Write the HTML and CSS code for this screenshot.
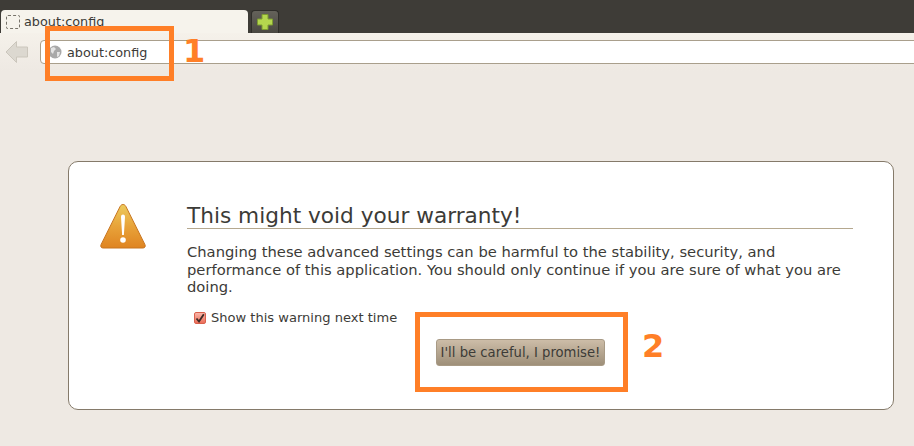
FILE: index.html
```html
<!DOCTYPE html>
<html lang="en">
<head>
  <meta charset="UTF-8" />
  <title>about:config</title>
  <link rel="stylesheet" href="styles.css">
</head>
<body>
  <div class="tabbar">
    <div class="tab">
      <span class="tab-icon"></span>
      <span class="tab-title">about:config</span>
    </div>
    <div class="new-tab">
      <svg width="18" height="18" viewBox="0 0 18 18">
        <path d="M6 1.5h6v4.5h4.5v6H12v4.5H6V12H1.5V6H6z" fill="#b4d64e" stroke="#7d9c30" stroke-width="1"/>
      </svg>
    </div>
  </div>

  <div class="navbar">
    <svg class="back" width="24" height="24" viewBox="0 0 24 24">
      <path d="M1 12L11.500 1.500V7H22.500V17H11.500V22.500z" fill="#dcd8d0" stroke="#cbc6bc" stroke-width="1"/>
    </svg>
    <div class="urlbar">
      <svg class="globe" width="14" height="14" viewBox="0 0 14 14">
        <circle cx="7" cy="7" r="6.500" fill="#a9a9a9"/>
        <path d="M3 3l3-1 2 2-2 2-1 3-2-2zM9 7l3 0-1 4-2 1z" fill="#e4e4e4"/>
      </svg>
      <span class="url-text">about:config</span>
    </div>
  </div>

  <!-- Warning card -->
  <main class="page">
    <div class="card">
      <div class="warn-icon">
        <svg width="48" height="48" viewBox="0 0 48 48">
          <defs>
            <linearGradient id="warn" x1="0" y1="0" x2="0" y2="1">
              <stop offset="0" stop-color="#eccb5c"/>
              <stop offset="0.5" stop-color="#e8a33a"/>
              <stop offset="1" stop-color="#df8421"/>
            </linearGradient>
          </defs>
          <path d="M24 2.500c1.300 0 2.200.7 2.900 2l19 38c.9 1.900 0 3.500-2 3.500H4.100c-2 0-2.900-1.600-2-3.500l19-38c.7-1.300 1.600-2 2.900-2z" fill="url(#warn)" stroke="#c8741f" stroke-width="1"/>
          <path d="M22 14.500c0-2.700 4-2.700 4 0L24.900 33h-1.800z" fill="#fff"/>
          <circle cx="24" cy="38" r="2.800" fill="#fff"/>
        </svg>
      </div>
      <div class="card-body">
        <h1 class="title">This might void your warranty!</h1>
        <p class="message">Changing these advanced settings can be harmful to the stability, security, and performance of this application. You should only continue if you are sure of what you are doing.</p>
        <label class="show-warning">
          <span class="check">
            <svg width="10" height="10" viewBox="0 0 10 10">
              <path d="M1.500 5.500L4 8.500 8.800 1.200" fill="none" stroke="#3c2a25" stroke-width="1.800"/>
            </svg>
          </span>
          Show this warning next time
        </label>
        <div class="actions">
          <button class="promise">I'll be careful, I promise!</button>
        </div>
      </div>
    </div>
  </main>

  <!-- Annotations drawn over the screenshot -->
  <div class="mark mark-one"></div>
  <div class="mark-num num-one">1</div>
  <div class="mark mark-two"></div>
  <div class="mark-num num-two">2</div>
</body>
</html>
```

FILE: styles.css
```css
* {
  box-sizing: border-box;
}

html,
body {
  height: 446px;
}

body {
  margin: 0;
  position: relative;
  overflow: hidden;
  background-color: #eee9e3;
  font-family: "DejaVu Sans", sans-serif;
  color: #3c3b37;
}

.tabbar {
  display: flex;
  align-items: flex-end;
  gap: 3px;
  height: 33px;
  padding-left: 1px;
  background-color: #3e3c37;
}

.tab {
  display: flex;
  align-items: center;
  gap: 4px;
  width: 247px;
  height: 23px;
  padding: 0 0 0 5px;
  background-color: #f6f3ec;
  border-radius: 4px 4px 0 0;
  overflow: hidden;
}

.tab-icon {
  width: 14px;
  height: 14px;
  border: 1px dashed #77736a;
  border-radius: 2px;
}

.tab-title {
  font-size: 12.800px;
}

.new-tab {
  display: flex;
  align-items: center;
  justify-content: center;
  width: 28px;
  height: 23px;
  background: linear-gradient(#64625a, #4a4842);
  border: 1px solid #2e2d29;
  border-bottom: 0;
  border-radius: 4px 4px 0 0;
}

.navbar {
  display: flex;
  align-items: center;
  gap: 11px;
  height: 38px;
  padding-left: 5px;
  background: linear-gradient(#f5f1ea, #eee9e3);
}

.urlbar {
  display: flex;
  align-items: center;
  gap: 5px;
  flex: 1;
  height: 24px;
  margin-right: -8px;
  padding-left: 7px;
  background-color: #fff;
  border: 1px solid #a99f8c;
  border-radius: 4px 0 0 4px;
}

.url-text {
  font-size: 12.800px;
}

.page {
  padding: 90px 20px 0 68px;
}

.card {
  display: flex;
  height: 249px;
  padding: 40px 40px 0 30px;
  background-color: #fff;
  border: 1px solid #857a6a;
  border-radius: 10px;
}

.warn-icon {
  width: 88px;
  flex-shrink: 0;
}

.card-body {
  flex: 1;
}

.title {
  margin: 0 0 14px;
  padding: 2px 0 0;
  font-size: 21.650px;
  font-weight: 400;
  line-height: 24px;
  border-bottom: 1px solid #b5a88f;
}

.message {
  margin: 0 0 12px;
  font-size: 14.730px;
  line-height: 17.500px;
}

.show-warning {
  display: flex;
  align-items: center;
  gap: 5px;
  margin: 0 0 0 7px;
  height: 20px;
  font-size: 13.050px;
}

.check {
  display: flex;
  align-items: center;
  justify-content: center;
  width: 12px;
  height: 12px;
  background: linear-gradient(#f9b5a8, #ec6f5a);
  border: 1px solid #d9604c;
  border-radius: 2px;
}

.actions {
  display: flex;
  margin-top: 11px;
  padding-left: 249px;
}

.promise {
  width: 169px;
  height: 27px;
  padding: 0;
  font-family: "DejaVu Sans", sans-serif;
  font-size: 13.200px;
  white-space: nowrap;
  color: #3c3b37;
  background: linear-gradient(#cdbda8, #9e8f79);
  border: 1px solid #a89a85;
  border-radius: 3px;
}

.mark {
  position: absolute;
  border: 5px solid #ff7f27;
}

.mark-one {
  left: 45px;
  top: 26px;
  width: 129px;
  height: 55px;
}

.mark-two {
  left: 415px;
  top: 312px;
  width: 213px;
  height: 80px;
}

.mark-num {
  position: absolute;
  font-size: 32px;
  font-weight: 700;
  line-height: 38px;
  color: #ff7f27;
}

.num-one {
  left: 183px;
  top: 32px;
}

.num-two {
  left: 642px;
  top: 327px;
}
```
